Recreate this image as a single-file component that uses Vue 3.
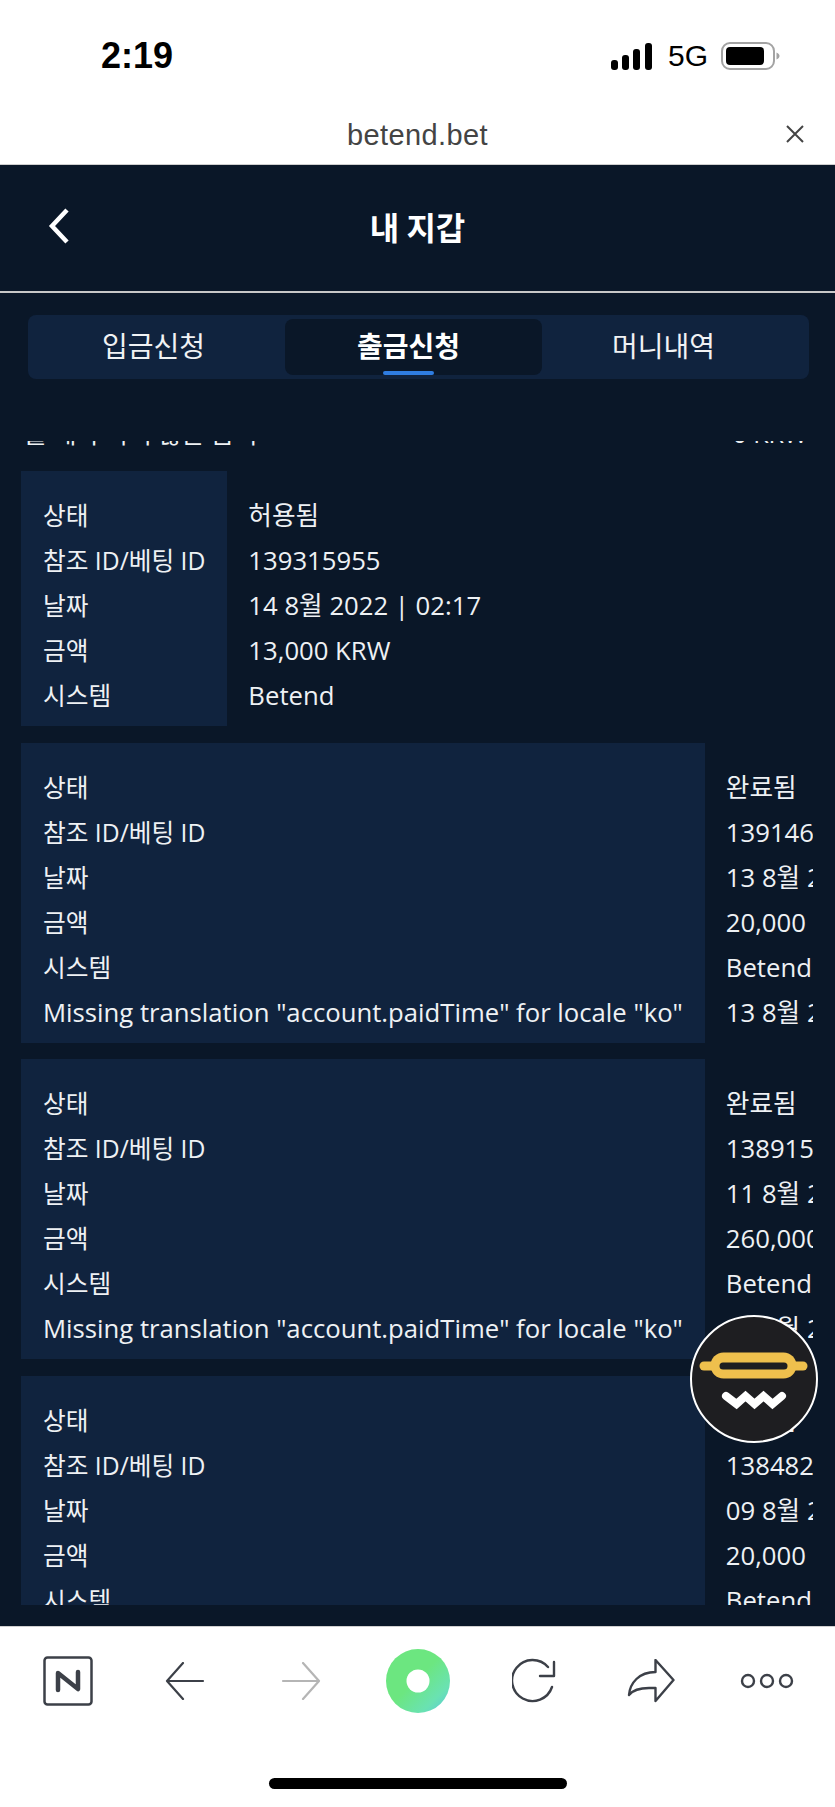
<script setup>
const tabs = ['입금신청', '출금신청', '머니내역']

const records = [
  { status: '허용됨', id: '139315955', date: '14 8월 2022 | 02:17', amount: '13,000 KRW', system: 'Betend' },
  { status: '완료됨', id: '139146871', date: '13 8월 2022 | 11:42', amount: '20,000 KRW', system: 'Betend', paid: '13 8월 2022 | 12:03' },
  { status: '완료됨', id: '138915204', date: '11 8월 2022 | 18:26', amount: '260,000 KRW', system: 'Betend', paid: '11 8월 2022 | 19:10' },
  { status: '완료됨', id: '138482637', date: '09 8월 2022 | 21:08', amount: '20,000 KRW', system: 'Betend', paid: '09 8월 2022 | 21:40' }
]
</script>

<template>
  <div class="page">
    <div class="status">
      <span class="time">2:19</span>
      <div class="indicators">
        <svg class="signal" width="44" height="28" viewBox="0 0 44 28">
          <rect x="1" y="18" width="7" height="10" rx="3" />
          <rect x="12" y="13" width="7" height="15" rx="3" />
          <rect x="23" y="7" width="7" height="21" rx="3" />
          <rect x="35" y="1" width="7" height="27" rx="3" />
        </svg>
        <span class="net">5G</span>
        <svg class="battery" width="60" height="28" viewBox="0 0 60 28">
          <rect x="1" y="1" width="52" height="26" rx="8" fill="none" stroke="#a3a3a3" stroke-width="2" />
          <rect x="5" y="5" width="38" height="18" rx="4" fill="#000" />
          <path d="M55.500 10.500c2 .8 3 2 3 3.500s-1 2.700-3 3.500z" fill="#a3a3a3" />
        </svg>
      </div>
    </div>

    <div class="urlbar">
      <span class="url">betend.bet</span>
      <svg class="close" width="18" height="18" viewBox="0 0 18 18">
        <path d="M1 1l16 16M17 1L1 17" stroke="#444" stroke-width="2" fill="none" />
      </svg>
    </div>

    <div class="screen">
      <div class="header">
        <svg class="back" width="24" height="36" viewBox="0 0 24 36">
          <path d="M20 2L5 18l15 16" stroke="#fff" stroke-width="4.500" fill="none" />
        </svg>
        <h1>내 지갑</h1>
      </div>

      <div class="tabs">
        <div v-for="(tab, i) in tabs" :key="tab" class="tab" :class="{ active: i === 1 }">
          {{ tab }}
          <span v-if="i === 1" class="underline"></span>
        </div>
      </div>

      <div class="list">
        <div class="scroller">
          <div class="summary">
            <span>롤 해야 하지 않은 금액</span>
            <span>0 KRW</span>
          </div>

          <div v-for="r in records" :key="r.id" class="record">
            <div class="labels">
              <div>상태</div>
              <div>참조 ID/베팅 ID</div>
              <div>날짜</div>
              <div>금액</div>
              <div>시스템</div>
              <div v-if="r.paid" class="missing">Missing translation "account.paidTime" for locale "ko"</div>
            </div>
            <div class="values">
              <div>{{ r.status }}</div>
              <div>{{ r.id }}</div>
              <div>{{ r.date }}</div>
              <div>{{ r.amount }}</div>
              <div>{{ r.system }}</div>
              <div v-if="r.paid">{{ r.paid }}</div>
            </div>
          </div>
        </div>
      </div>
    </div>

    <div class="toolbar">
      <div class="tool">
        <svg width="50" height="50" viewBox="0 0 50 50">
          <rect x="1.500" y="1.500" width="47" height="47" rx="3" fill="none" stroke="#3c4048" stroke-width="2.500" />
          <path d="M15 34V17l20 16V16" fill="none" stroke="#3c4048" stroke-width="4.500" stroke-linecap="round" stroke-linejoin="round" />
        </svg>
      </div>
      <div class="tool">
        <svg width="40" height="38" viewBox="0 0 40 38">
          <path d="M38 19H3M18 1L2 19l16 18" fill="none" stroke="#3c4048" stroke-width="2.200" stroke-linecap="round" stroke-linejoin="round" />
        </svg>
      </div>
      <div class="tool">
        <svg width="40" height="38" viewBox="0 0 40 38">
          <path d="M2 19h35M22 1l16 18-16 18" fill="none" stroke="#b5b5b5" stroke-width="2.200" stroke-linecap="round" stroke-linejoin="round" />
        </svg>
      </div>
      <div class="tool">
        <svg width="66" height="66" viewBox="0 0 66 66">
          <defs>
            <linearGradient id="dot" x1="0.250" y1="0.250" x2="1" y2="1">
              <stop offset="0.300" stop-color="#6ce680" />
              <stop offset="0.700" stop-color="#6ae2b2" />
              <stop offset="1" stop-color="#57c6e0" />
            </linearGradient>
          </defs>
          <circle cx="33" cy="33" r="32" fill="url(#dot)" />
          <circle cx="33" cy="33" r="11.500" fill="#fff" />
        </svg>
      </div>
      <div class="tool">
        <svg width="44" height="46" viewBox="0 0 44 46">
          <path d="M40 29a20.500 20.500 0 1 1-4-20M42 4v14H28" fill="none" stroke="#3c4048" stroke-width="2.400" stroke-linecap="round" stroke-linejoin="round" />
        </svg>
      </div>
      <div class="tool">
        <svg width="48" height="44" viewBox="0 0 48 44">
          <path d="M28.500 1l18 20-18 21V29H22C12 29 6 31 2 36 3 24 12 13 28.500 13z" fill="none" stroke="#3c4048" stroke-width="2.400" stroke-linejoin="round" />
        </svg>
      </div>
      <div class="tool">
        <svg width="54" height="16" viewBox="0 0 54 16">
          <circle cx="8" cy="8" r="6" fill="none" stroke="#3c4048" stroke-width="2.400" />
          <circle cx="27" cy="8" r="6" fill="none" stroke="#3c4048" stroke-width="2.400" />
          <circle cx="46" cy="8" r="6" fill="none" stroke="#3c4048" stroke-width="2.400" />
        </svg>
      </div>
    </div>

    <div class="home"><span></span></div>

    <div class="fab">
      <svg width="123" height="123" viewBox="0 0 123 123">
        <rect x="7.500" y="44.500" width="108" height="9" rx="4.500" fill="#efc04d" />
        <rect x="18.500" y="35.500" width="86" height="26" rx="13" fill="#efc04d" />
        <rect x="27.500" y="45.500" width="68" height="7" rx="3.500" fill="#1e1e21" />
        <path d="M34 79l10.500 8 9-8 9 8 9-8 9 8 9.500-8" fill="none" stroke="#fff" stroke-width="8" stroke-linecap="round" />
      </svg>
    </div>
  </div>
</template>

<style scoped>
.page {
  position: relative;
  width: 835px;
  height: 1807px;
  overflow: hidden;
  background: #fff;
  font-family: "Open Sans", "Noto Sans CJK KR", sans-serif;
}

.status {
  height: 94px;
  display: flex;
  align-items: center;
  justify-content: space-between;
  padding: 18px 54px 0 101px;
  box-sizing: border-box;
  color: #000;
  font-family: "Liberation Sans", sans-serif;
}

.time {
  font-size: 36px;
  font-weight: 700;
}

.indicators {
  display: flex;
  align-items: center;
  gap: 14px;
}

.net {
  font-size: 30px;
  margin-right: -1px;
}

.urlbar {
  height: 71px;
  display: flex;
  align-items: center;
  justify-content: center;
  position: relative;
  border-bottom: 1px solid #cfcfcf;
  box-sizing: border-box;
  padding-top: 12px;
}

.url {
  font-family: "Liberation Sans", sans-serif;
  font-size: 29px;
  letter-spacing: 0.4px;
  color: #444;
}

.close {
  position: absolute;
  top: 31px;
  right: 31px;
}

.screen {
  height: 1461px;
  background: #0a1728;
  overflow: hidden;
}

.header {
  position: relative;
  height: 128px;
  display: flex;
  align-items: center;
  justify-content: center;
  padding-bottom: 5px;
  box-sizing: border-box;
  border-bottom: 2px solid #c8c8c8;
}

.header h1 {
  margin: 0;
  font-family: "Noto Sans CJK KR", sans-serif;
  font-size: 32px;
  font-weight: 700;
  color: #fff;
}

.back {
  position: absolute;
  left: 47px;
  top: 43px;
}

.tabs {
  display: grid;
  grid-template-columns: 257px 257px 1fr;
  height: 64px;
  margin: 22px 26px 0 28px;
  padding: 4px 0;
  box-sizing: border-box;
  background: #10233e;
  border-radius: 8px;
}

.tab {
  position: relative;
  display: flex;
  align-items: center;
  padding: 0 0 4px 74px;
  font-family: "Noto Sans CJK KR", sans-serif;
  font-size: 28px;
  color: #f0f2f4;
  border-radius: 8px;
}

.tab.active {
  background: #0a1728;
  font-weight: 700;
  color: #fff;
  padding-left: 72px;
}

.tab:last-child {
  padding-left: 70px;
}

.underline {
  position: absolute;
  left: 98px;
  bottom: 0;
  width: 51px;
  height: 4px;
  border-radius: 2px;
  background: #2f7de1;
}

.list {
  height: 1164px;
  margin: 62px 22px 0 21px;
  overflow: hidden;
}

.scroller {
  margin-top: -30px;
  font-size: 25.700px;
  line-height: 45px;
  color: #eef1f4;
}

.summary {
  display: flex;
  justify-content: space-between;
  padding: 0 6px 0 3px;
  margin-bottom: 15px;
  font-size: 25px;
}

.record {
  display: flex;
  margin-bottom: 16.500px;
  white-space: nowrap;
}

.labels {
  background: #10233e;
  padding: 22px 22px 8px;
  font-size: 24.700px;
}

.missing {
  font-size: 25.700px;
}

.values {
  padding: 22px 21px 8px 21px;
}

.toolbar {
  height: 108px;
  display: grid;
  grid-template-columns: repeat(7, 116.500px);
  padding: 0 0 0 10px;
  border-top: 1px solid #d0d0d0;
  box-sizing: border-box;
  align-items: center;
}

.tool {
  display: flex;
  justify-content: center;
  align-items: center;
}

.home {
  display: flex;
  justify-content: center;
  padding-top: 44px;
}

.home span {
  display: block;
  width: 298px;
  height: 11px;
  border-radius: 6px;
  background: #000;
}

.fab {
  position: absolute;
  left: 690px;
  top: 1315px;
  width: 128px;
  height: 128px;
  box-sizing: border-box;
  border: 2.500px solid #fff;
  border-radius: 50%;
  background: #1e1e21;
}

.fab svg {
  display: block;
}
</style>
